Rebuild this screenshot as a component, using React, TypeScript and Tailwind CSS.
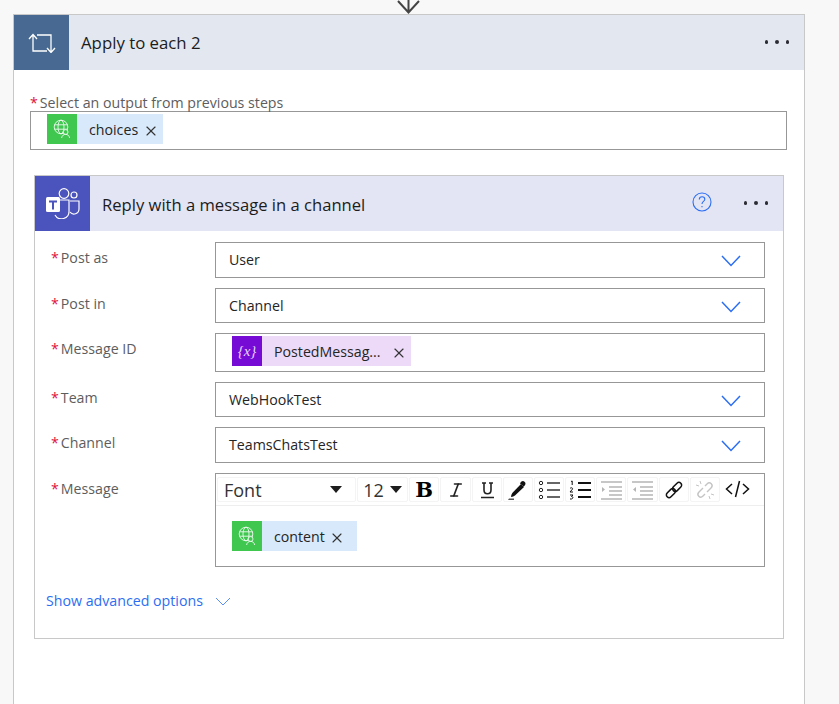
import { ReactNode } from "react";
import { X, Italic } from "lucide-react";

const font = "font-['Open_Sans','Noto_Sans',sans-serif]";

const Chevron = () => (
  <svg className="mt-[2px]" width="20" height="12" viewBox="0 0 20 12" fill="none" stroke="#2b6ef2" strokeWidth="1.5">
    <path d="M1 1l9 9.5L19 1" />
  </svg>
);

const Dots = () => (
  <div className="flex gap-[7px]">
    <span className="w-[3.5px] h-[3.5px] rounded-full bg-[#2b2b33]" />
    <span className="w-[3.5px] h-[3.5px] rounded-full bg-[#2b2b33]" />
    <span className="w-[3.5px] h-[3.5px] rounded-full bg-[#2b2b33]" />
  </div>
);

const GlobeIcon = () => (
  <svg width="18" height="20" viewBox="0 0 18 20" fill="none" stroke="#fff" strokeWidth="0.9" opacity="0.92">
    <circle cx="8" cy="8" r="6.8" />
    <ellipse cx="8" cy="8" rx="3" ry="6.8" />
    <path d="M1.4 5.8h13.2M1.4 10.2h13.2" />
    <circle cx="12.6" cy="13" r="2.4" fill="#3fc74f" />
    <path d="M8.6 19c.4-2.6 2-3.6 4-3.6s3.600 1 4 3.600" />
  </svg>
);

const Chip = ({
  icon,
  iconBg,
  bg,
  label,
  width,
  closeGap = "ml-[4.5px]",
}: {
  icon: ReactNode;
  iconBg: string;
  bg: string;
  label: string;
  width: string;
  closeGap?: string;
}) => (
  <div className={`flex items-center h-[30px] ${bg} ${width}`}>
    <div className={`w-[30px] h-[30px] flex items-center justify-center shrink-0 ${iconBg}`}>{icon}</div>
    <span className="ml-3 mt-[1px] text-[14.2px] text-[#252525] whitespace-nowrap">{label}</span>
    <X size={16} strokeWidth={1.7} className={`${closeGap} mt-[4px] text-[#333]`} />
  </div>
);

const Field = ({ label, className, children }: { label: string; className: string; children: ReactNode }) => (
  <div className="flex">
    <div className="w-[180px] pl-[16px] text-[14.2px] text-[#5d5d5d] leading-[18px] mt-[7px] shrink-0">
      <span className="text-[#e0103a] mr-[2px]">*</span>
      {label}
    </div>
    <div className={`w-[550px] border border-[#979797] bg-white ${className}`}>{children}</div>
  </div>
);

const Dropdown = ({ label, value, h }: { label: string; value: string; h: string }) => (
  <Field label={label} className={`${h} flex items-center justify-between pl-[13px] pr-[23px]`}>
    <span className="text-[14.2px] text-[#252525]">{value}</span>
    <Chevron />
  </Field>
);

const Tool = ({ w, children }: { w: string; children: ReactNode }) => (
  <div className={`h-[25px] ${w} shrink-0 rounded-[2px] border border-[#f4f4f4] flex items-center justify-center`}>{children}</div>
);

const ListLines = ({ color, w = 2 }: { color: string; w?: number }) => (
  <path d="M9 3h13M9 10h13M9 17h13" stroke={color} strokeWidth={w} fill="none" />
);

export default function App() {
  return (
    <div className={`relative w-[839px] h-[704px] overflow-hidden bg-[#f8f8f8] ${font}`}>
      <svg className="absolute left-[396px] top-0" width="25" height="15" viewBox="0 0 25 15" fill="none" stroke="#444" strokeWidth="2">
        <path d="M12.500 -2v15M2 1l10.500 11.500L23 1" />
      </svg>

      <div className="ml-[13px] mt-[14px] w-[792px] h-[700px] border border-[#c8c8c8] bg-white">
        <div className="flex items-center h-[55px] bg-[#e3e7f0]">
          <div className="w-[55px] h-[55px] bg-[#486991] flex items-center justify-center">
            <svg width="28" height="20" viewBox="0 0 28 20" fill="none" stroke="#fff" strokeWidth="1.3">
              <path d="M1 6l4-4.500L9 6M5 2v16h14M27 15l-4 4.500L19 15M23 19V2H9" />
            </svg>
          </div>
          <span className="ml-3 mt-[1px] text-[16.8px] text-[#1c1c1c]">Apply to each 2</span>
          <div className="ml-auto mr-[15px] mb-[1px]">
            <Dots />
          </div>
        </div>

        <div className="ml-[16px] mt-[24px] text-[14.2px] leading-[17px] text-[#5d5d5d]">
          <span className="text-[#e0103a] mr-[2px]">*</span>
          Select an output from previous steps
        </div>
        <div className="ml-[16px] w-[757px] h-[39px] border border-[#979797] pl-[16px] pt-[2px]">
          <Chip icon={<GlobeIcon />} iconBg="bg-[#3fc74f]" bg="bg-[#d7e9fa]" label="choices" width="w-[116px]" />
        </div>

        <div className="ml-[20px] mt-[25px] w-[750px] h-[464px] border border-[#c8c8c8]">
          <div className="flex items-center h-[55px] bg-[#e3e4f4]">
            <div className="w-[55px] h-[55px] bg-[#4b53bc] flex items-center justify-center">
              <svg width="34" height="31" viewBox="0 0 34 31" fill="none" stroke="#fff" strokeWidth="1.200">
                <circle cx="18" cy="5.500" r="4.800" />
                <circle cx="28" cy="7" r="3" />
                <path d="M8 24v-12h15v11a7.500 7.500 0 0 1-14 4" />
                <path d="M24 13h9v8a5 5 0 0 1-9 3" />
                <rect x="0" y="9" width="14" height="15" rx="1.500" fill="#fff" stroke="none" />
                <path d="M3 12.500h8v2H8v7H6v-7H3z" fill="#4b53bc" stroke="none" />
              </svg>
            </div>
            <span className="ml-3 mt-[3px] text-[16.6px] text-[#1c1c1c]">Reply with a message in a channel</span>
            <svg className="ml-auto mb-[3px]" width="20" height="20" viewBox="0 0 20 20" fill="none" stroke="#2b6ef2" strokeWidth="1.100">
              <circle cx="10" cy="10" r="9" />
              <path d="M7.300 7.500c0-1.700 1.200-2.700 2.800-2.700s2.700 1 2.700 2.400c0 2.300-2.800 2.200-2.800 4.800" />
              <path d="M10 14v1.300" />
            </svg>
            <div className="ml-[32px] mr-[15px] mb-[1px]">
              <Dots />
            </div>
          </div>

          <div className="flex flex-col gap-[10px] mt-[11px]">
            <Dropdown label="Post as" value="User" h="h-[36px]" />
            <Dropdown label="Post in" value="Channel" h="h-[35px]" />
            <Field label="Message ID" className="h-[39px] pl-[16px] pt-[2px]">
              <Chip
                icon={<span className="font-['Liberation_Serif',serif] italic text-[15px] text-[#e9d4fa]">{"{x}"}</span>}
                iconBg="bg-[#770bd6]"
                bg="bg-[#ecdaf8]"
                label="PostedMessag..."
                width="w-[179px]"
                closeGap="ml-[10px]"
              />
            </Field>
            <Dropdown label="Team" value="WebHookTest" h="h-[35px]" />
            <Dropdown label="Channel" value="TeamsChatsTest" h="h-[36px]" />
            <Field label="Message" className="h-[94px]">
              <div className="flex items-center gap-[1px] h-[32px] border-b border-[#eeeeee] pl-[1px] pb-[3px] pt-[3px]">
                <Tool w="w-[139px]">
                  <span className="ml-[6px] text-[18px] leading-none text-[#333]">Font</span>
                  <span className="ml-auto mr-[13px] border-x-[6.5px] border-x-transparent border-t-[7px] border-t-[#1d1d1d]" />
                </Tool>
                <Tool w="w-[51px]">
                  <span className="text-[18px] leading-none text-[#333]">12</span>
                  <span className="ml-[6px] border-x-[6.5px] border-x-transparent border-t-[7px] border-t-[#1d1d1d]" />
                </Tool>
                <Tool w="w-[30px]">
                  <span className="font-['DejaVu_Serif',serif] font-bold text-[21px] leading-none text-black">B</span>
                </Tool>
                <Tool w="w-[31px]">
                  <Italic size={18} strokeWidth={2.2} className="text-[#222]" />
                </Tool>
                <Tool w="w-[30px]">
                  <svg width="17" height="18" viewBox="0 0 17 18" fill="none" stroke="#222">
                    <path d="M3 2h4M10 2h4M5 2v7c0 5 7 5 7 0V2M2 16.500h13" strokeWidth="1.600" />
                  </svg>
                </Tool>
                <Tool w="w-[30px]">
                  <svg width="20" height="20" viewBox="0 0 20 20">
                    <path d="M13 4l3 3-9 8.500c-1.200.8-2.500 1.200-3.500 1.500l-.5-.5c.2-1 .5-2.300 1.300-3.500z" fill="#111" />
                    <path d="M12 3.500c1.500-2.500 3-3 4.500-1.700 1.700 1.400 1.200 3-.7 4.800z" fill="#111" />
                    <path d="M0 20h6v-1.500H1z" fill="#555" />
                  </svg>
                </Tool>
                <Tool w="w-[30px]">
                  <svg width="22" height="20" viewBox="0 0 22 20" fill="none">
                    <circle cx="3" cy="3" r="1.700" stroke="#222" />
                    <circle cx="3" cy="10" r="1.700" stroke="#222" />
                    <circle cx="3" cy="17" r="1.700" stroke="#222" />
                    <ListLines color="#666" />
                  </svg>
                </Tool>
                <Tool w="w-[30px]">
                  <svg width="22" height="20" viewBox="0 0 22 20" fill="none">
                    <path d="M2 1.500l1.200-.5v4M1 8.500c1-1.200 3-.8 2.500.6L1 12h3M1 15h3l-1.500 1.500c2-.2 2 3-1.500 2.500" stroke="#111" strokeWidth="1" />
                    <ListLines color="#111" w={2.200} />
                  </svg>
                </Tool>
                <Tool w="w-[30px]">
                  <svg width="21" height="20" viewBox="0 0 21 20" fill="none" stroke="#b5b5b5" strokeWidth="1.500">
                    <path d="M0 2h21M8 7h13M8 11h13M8 15h13M0 19h21" />
                    <path d="M1 7l3 2.500L1 12z" fill="#b5b5b5" stroke="none" />
                  </svg>
                </Tool>
                <Tool w="w-[31px]">
                  <svg width="21" height="20" viewBox="0 0 21 20" fill="none" stroke="#b5b5b5" strokeWidth="1.500">
                    <path d="M0 2h21M8 7h13M8 11h13M8 15h13M0 19h21" />
                    <path d="M4 7L1 9.500 4 12z" fill="#b5b5b5" stroke="none" />
                  </svg>
                </Tool>
                <Tool w="w-[30px]">
                  <svg width="20" height="20" viewBox="0 0 20 20" fill="none" stroke="#111" strokeWidth="1.500">
                    <rect x="-4" y="-2.700" width="10.500" height="5.400" rx="2.700" transform="translate(6 14) rotate(-45)" />
                    <rect x="-6.500" y="-2.700" width="10.500" height="5.400" rx="2.700" transform="translate(14 6) rotate(-45)" />
                  </svg>
                </Tool>
                <Tool w="w-[30px]">
                  <svg width="20" height="20" viewBox="0 0 20 20" fill="none" stroke="#c4c4c4" strokeWidth="1.400">
                    <path d="M8 8L4 12c-3 3 1 7 4 4l2-2M12 12l4-4c3-3-1-7-4-4l-2 2" />
                    <path d="M5 1l1 3M1 5l3 1M15 19l-1-3M19 15l-3-1" strokeWidth="1" />
                  </svg>
                </Tool>
                <div className="w-[30px] ml-[1px] flex items-center justify-center">
                  <svg className="mb-[1px]" width="25" height="18" viewBox="0 0 25 18" fill="none" stroke="#111" strokeWidth="1.500">
                    <path d="M7 4L1.500 9 7 14M18 4l5.500 5L18 14M14.500 1L10.500 17" />
                  </svg>
                </div>
              </div>
              <div className="ml-[16px] mt-[15px]">
                <Chip icon={<GlobeIcon />} iconBg="bg-[#3fc74f]" bg="bg-[#d7e9fa]" label="content" width="w-[125px]" />
              </div>
            </Field>
          </div>

          <div className="flex items-center ml-[11px] mt-[24px] text-[14.2px] leading-[20px] text-[#2b6ef2]">
            Show advanced options
            <svg className="ml-[12px]" width="16" height="9" viewBox="0 0 16 9" fill="none" stroke="#5b8ef0" strokeWidth="1">
              <path d="M1 1l7 7 7-7" />
            </svg>
          </div>
        </div>
      </div>
    </div>
  );
}
